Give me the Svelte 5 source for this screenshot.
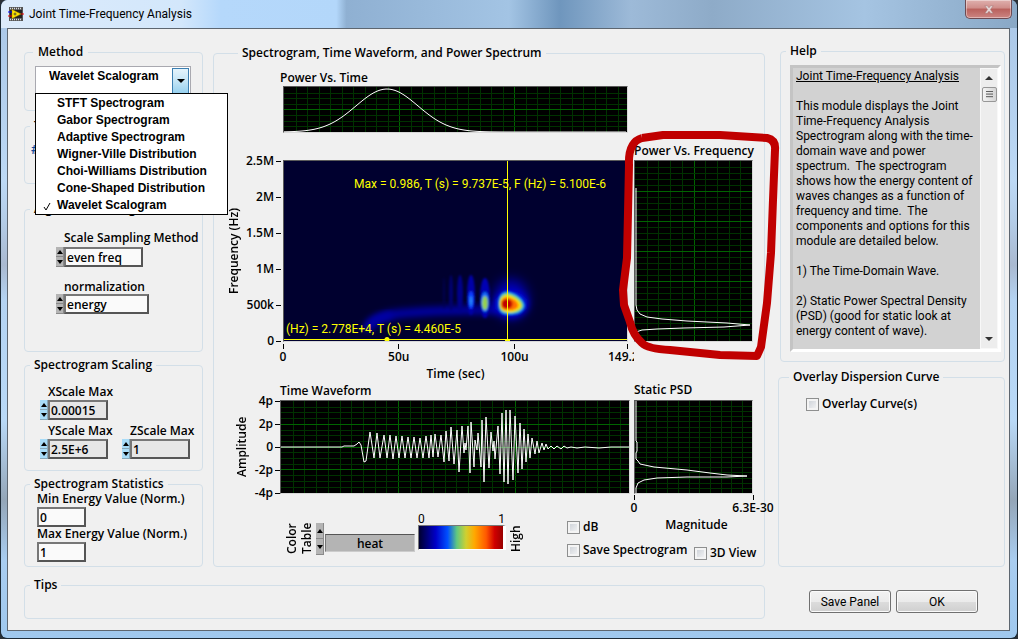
<script>
    let method = "Wavelet Scalogram";
    let menuOpen = true;

    const methods = [
        "STFT Spectrogram",
        "Gabor Spectrogram",
        "Adaptive Spectrogram",
        "Wigner-Ville Distribution",
        "Choi-Williams Distribution",
        "Cone-Shaped Distribution",
        "Wavelet Scalogram"
    ];

    const helpText = `This module displays the Joint
Time-Frequency Analysis
Spectrogram along with the time-
domain wave and power
spectrum.  The spectrogram
shows how the energy content of
waves changes as a function of
frequency and time.  The
components and options for this
module are detailed below.

1) The Time-Domain Wave.

2) Static Power Spectral Density
(PSD) (good for static look at
energy content of wave).`;

    const freqTicks = ["2.5M", "2M", "1.5M", "1M", "500k", "0"];
    const ampTicks = ["4p", "2p", "0", "-2p", "-4p"];

    // every peak and trough of the waveform, x from 0 to 348, y from 0 to 92
    const wave = [
        [0, 46], [61, 46], [63, 45], [73, 45], [76, 43], [78, 41], [80, 44], [83, 61], [85, 60], [89, 31], [93, 57], [96, 32], [99, 57],
        [103, 34], [106, 57], [109, 34], [112, 58], [115, 35], [118, 57], [121, 35], [124, 57], [127, 36], [130, 57],
        [133, 36], [136, 57], [139, 37], [142, 57], [145, 35], [148, 57], [150, 34], [152, 56], [154, 33], [157, 56],
        [160, 34], [163, 61], [165, 30], [168, 60], [170, 26], [173, 63], [176, 29], [178, 71], [181, 25], [183, 52],
        [184, 42], [185, 49], [187, 25], [189, 72], [190, 21], [193, 66], [194, 39], [196, 49], [197, 32], [200, 66],
        [201, 19], [203, 81], [205, 16], [208, 67], [210, 31], [212, 50], [213, 40], [214, 58], [217, 25], [219, 73],
        [221, 12], [223, 81], [225, 9], [227, 83], [229, 9], [232, 79], [234, 15], [237, 72], [239, 22], [241, 68],
        [243, 28], [245, 61], [247, 33], [249, 57], [251, 37], [254, 53], [256, 40], [258, 52], [261, 42], [263, 49],
        [265, 43], [267, 48], [270, 45], [273, 48], [276, 45], [280, 48], [283, 45], [286, 47], [290, 46], [296, 47],
        [304, 46], [318, 47], [330, 46], [348, 46]
    ];

    const powerTime = [];
    for (let x = 0; x <= 343; x += 3) {
        powerTime.push([x, 45 - 43 * Math.exp(-((x - 103) ** 2) / (2 * 31 ** 2))]);
    }

    const powerFreq = [
        [1, 27], [1, 144], [2, 149], [5, 153], [12, 156], [27, 158], [52, 160], [92, 162], [115, 164],
        [89, 166], [49, 167], [22, 168], [7, 169], [1, 171], [0, 178]
    ];

    const staticPsd = [
        [1, 0], [1, 40], [2, 41], [2, 50], [1, 52], [1, 58], [3, 60], [5, 63], [19, 66], [52, 69], [75, 72], [92, 74], [112, 75],
        [92, 76], [52, 76], [22, 77], [9, 79], [3, 82], [1, 87], [1, 92]
    ];

    const toPoints = (list) => list.map((p) => p.join(",")).join(" ");

    function lines(step, end) {
        let out = [];
        for (let v = step; v < end - 1; v += step) out.push(Math.round(v));
        return out;
    }

    function pick(name) {
        method = name;
        menuOpen = false;
    }
</script>

{#snippet chart(w, h, dx, dy, majorX, majorY, points, label)}
    <svg class="chart" viewBox="0 0 {w} {h}" preserveAspectRatio="none" role="img" aria-label={label}>
        {#each lines(dx, w) as x, i}
            <line class="grid" class:major={(i + 1) % majorX == 0} x1={x} y1="0" x2={x} y2={h} />
        {/each}
        {#each lines(dy, h) as y, i}
            <line class="grid" class:major={(i + 1) % majorY == 0} x1="0" y1={y} x2={w} y2={y} />
        {/each}
        <polyline class="trace" points={toPoints(points)} />
    </svg>
{/snippet}

{#snippet spinner(kind)}
    <span class="spinner {kind}">
        <button type="button" aria-label="Increase"><svg viewBox="0 0 6 4"><path d="M0 4 3 0 6 4z" /></svg></button>
        <button type="button" aria-label="Decrease"><svg viewBox="0 0 6 4"><path d="M0 0H6L3 4z" /></svg></button>
    </span>
{/snippet}

<div class="window">
    <header class="titlebar">
        <svg class="appIcon" viewBox="0 0 16 14">
            <rect x="1" width="14" height="14" fill="#555" />
            <path d="M2 1.500H14M2 12.500H14" stroke="#ddd" stroke-width="1.500" stroke-dasharray="1 1" />
            <rect x="2" y="3" width="12" height="8" fill="#222" />
            <path d="M4 2.500 13 7 4 11.500z" fill="#ffe500" stroke="#a80" stroke-width=".5" />
            <path d="M0 5H4" stroke="#00f" />
            <path d="M0 9H4M13 7H16" stroke="#e00" />
            <path d="M5.500 7H8.500M7 5.500V8.500" stroke="#333" stroke-width=".8" />
        </svg>
        <span class="title">Joint Time-Frequency Analysis</span>
        <button class="close" type="button" aria-label="Close">
            <svg viewBox="0 0 12 10"><path d="M1 .5H4L6 3 8 .5H11L7.700 5 11 9.500H8L6 7 4 9.500H1L4.300 5z" /></svg>
        </button>
    </header>

    <main>
        <div class="left">
            <fieldset class="method">
                <legend>Method</legend>
                <div class="combo">
                    <select aria-label="Method" bind:value={method} on:mousedown|preventDefault={() => (menuOpen = !menuOpen)}>
                        {#each methods as m}
                            <option>{m}</option>
                        {/each}
                    </select>
                    <span class="arrow"><svg viewBox="0 0 8 4"><path d="M0 0H8L4 4z" /></svg></span>
                    {#if menuOpen}
                        <div class="menu" role="listbox">
                            {#each methods as m}
                                <button type="button" role="option" aria-selected={m == method} on:click={() => pick(m)}>
                                    <span class="tick">
                                        {#if m == method}
                                            <svg viewBox="0 0 8 9"><path d="M1 5 3 8 7 1" /></svg>
                                        {/if}
                                    </span>{m}
                                </button>
                            {/each}
                        </div>
                    {/if}
                </div>
            </fieldset>

            <fieldset class="covered">
                <legend>T</legend>
                <span class="hash">#</span>
            </fieldset>

            <fieldset class="algorithm">
                <legend>Algorithm Settings</legend>
                <label for="sampling">Scale Sampling Method</label>
                <div class="field">{@render spinner("grey")}<input id="sampling" class="short" value="even freq" /></div>
                <label class="next" for="norm">normalization</label>
                <div class="field">{@render spinner("grey")}<input id="norm" class="long" value="energy" /></div>
            </fieldset>

            <fieldset class="scaling">
                <legend>Spectrogram Scaling</legend>
                <div class="pairs">
                    <div>
                        <label for="xmax">XScale Max</label>
                        <div class="field">{@render spinner("blue")}<input id="xmax" value="0.00015" /></div>
                    </div>
                    <div></div>
                    <div>
                        <label for="ymax">YScale Max</label>
                        <div class="field">{@render spinner("blue")}<input id="ymax" value="2.5E+6" /></div>
                    </div>
                    <div>
                        <label for="zmax">ZScale Max</label>
                        <div class="field">{@render spinner("blue")}<input id="zmax" value="1" /></div>
                    </div>
                </div>
            </fieldset>

            <fieldset class="stats">
                <legend>Spectrogram Statistics</legend>
                <label for="min">Min Energy Value (Norm.)</label>
                <input id="min" value="0" />
                <label for="max">Max Energy Value (Norm.)</label>
                <input id="max" value="1" />
            </fieldset>
        </div>

        <fieldset class="middle">
            <legend>Spectrogram, Time Waveform, and Power Spectrum</legend>
            <div class="plots">
                <h2 class="pvt">Power Vs. Time</h2>
                <div class="frame inset powerTime">
                    {@render chart(343, 45, 11.5, 5.6, 10, 4, powerTime, "Power Vs. Time")}
                </div>

                <div class="yAxis freq">
                    <span class="axisTitle">Frequency (Hz)</span>
                    <div class="ticks">
                        {#each freqTicks as t}<span>{t}</span>{/each}
                    </div>
                </div>
                <div class="frame inset spectrogram">
                    <svg class="chart" viewBox="0 0 343 180" preserveAspectRatio="none" role="img" aria-label="Spectrogram">
                        <defs>
                            <filter id="soft1" x="-50%" y="-50%" width="200%" height="200%"><feGaussianBlur stdDeviation="1" /></filter>
                            <filter id="soft3" x="-50%" y="-50%" width="200%" height="200%"><feGaussianBlur stdDeviation="3" /></filter>
                            <filter id="soft6" x="-80%" y="-80%" width="260%" height="260%"><feGaussianBlur stdDeviation="6" /></filter>
                        </defs>
                        <rect width="343" height="180" fill="#00002f" />
                        <path d="M84 166C92 154 108 153 137 151S190 149 212 149" fill="none" stroke="#0000a0" stroke-width="9" stroke-linecap="round" filter="url(#soft3)" />
                        <path d="M84 166C90 158 98 156 108 154" fill="none" stroke="#0000a8" stroke-width="7" filter="url(#soft3)" />
                        <g filter="url(#soft1)">
                            <ellipse cx="167" cy="132" rx="2" ry="18" fill="#000070" />
                            <ellipse cx="160" cy="132" rx="1" ry="16" fill="#000050" />
                            <ellipse cx="176" cy="133" rx="3" ry="19" fill="#000088" />
                            <ellipse cx="187" cy="134" rx="4" ry="20" fill="#0000a8" />
                            <ellipse cx="201" cy="137" rx="5" ry="20" fill="#0000b4" />
                            <ellipse cx="187" cy="139" rx="3" ry="9" fill="#0b3cff" />
                            <ellipse cx="187" cy="140" rx="1" ry="5" fill="#2a92f0" />
                            <ellipse cx="201" cy="141" rx="4" ry="10" fill="#1470ff" />
                            <ellipse cx="201" cy="142" rx="3" ry="7" fill="#9bd850" />
                        </g>
                        <ellipse cx="227" cy="138" rx="17" ry="20" fill="#0000b0" filter="url(#soft6)" />
                        <ellipse cx="227" cy="143" rx="17" ry="13" fill="#0008e0" filter="url(#soft3)" />
                        <g filter="url(#soft1)">
                            <path d="M214 143C214 131 221 129 227 131C236 134 241 140 241 145C240 152 232 154 225 154C217 154 214 151 214 143z" fill="#1890f0" />
                            <path d="M215 143C215 133 222 131 227 133C235 136 239 141 239 145C238 150 231 153 225 152C218 152 215 149 215 143z" fill="#7cd860" />
                            <path d="M216 143C216 135 222 133 227 135C234 138 237 142 237 145C236 149 230 151 225 151C219 151 216 148 216 143z" fill="#ffd800" />
                            <path d="M217 143C217 137 222 135 226 137C232 139 234 142 234 145C233 148 228 150 224 149C219 149 217 147 217 143z" fill="#ff7000" />
                            <ellipse cx="223" cy="143" rx="5.500" ry="5" fill="#c00000" />
                        </g>
                        <path d="M0 178.500H343M223.500 0V180" stroke="#ffff00" vector-effect="non-scaling-stroke" />
                        <circle cx="103" cy="178.500" r="2.500" fill="#ffff00" />
                        <rect x="221" y="178" width="5" height="2" fill="#ffff00" />
                    </svg>
                    <span class="readout maxValue">Max = 0.986, T (s) = 9.737E-5, F (Hz) = 5.100E-6</span>
                    <span class="readout cursorValue">(Hz) = 2.778E+4, T (s) = 4.460E-5</span>
                </div>
                <div class="timeAxis">
                    <div class="xTicks">
                        <span><b>0</b></span>
                        <span><b>50u</b></span>
                        <span><b>100u</b></span>
                        <span class="last"><b>149.2</b></span>
                    </div>
                    <div class="axisName">Time (sec)</div>
                </div>

                <h2 class="pvf">Power Vs. Frequency</h2>
                <div class="frame powerFreq">
                    {@render chart(117, 180, 11.7, 6, 5, 5, powerFreq, "Power Vs. Frequency")}
                    <svg class="marker" viewBox="0 0 164 232">
                        <path d="M24 8 45 5 102 5 149 8Q158 10 157 20L155 70 153 123 149 173 143 217 139 226 102 225 52 220Q30 219 24 213 15 205 12 192L6 175 5 160 9 128 10 83 11 35Q10 12 24 8" />
                    </svg>
                </div>

                <h2 class="tw">Time Waveform</h2>
                <div class="yAxis amp">
                    <span class="axisTitle">Amplitude</span>
                    <div class="ticks">
                        {#each ampTicks as t}<span>{t}</span>{/each}
                    </div>
                </div>
                <div class="frame waveform">
                    {@render chart(348, 92, 11.7, 5.7, 10, 4, wave, "Time Waveform")}
                </div>

                <h2 class="psdTitle">Static PSD</h2>
                <div class="frame psd">
                    {@render chart(117, 92, 10.7, 5.1, 99, 99, staticPsd, "Static PSD")}
                </div>
                <div class="psdAxis">
                    <div class="psdTicks">
                        <span><b>0</b></span>
                        <span><b>6.3E-30</b></span>
                    </div>
                    <div class="axisName">Magnitude</div>
                    <label class="check view3d"><input type="checkbox" />3D View</label>
                </div>

                <div class="controls">
                    <label class="vertical" for="ctable">Color<br />Table</label>
                    {@render spinner("tall")}
                    <input id="ctable" class="heat" value="heat" />
                    <div class="ramp">
                        <div class="rampEnds"><span>0</span><span>1</span></div>
                        <div class="rampBar"></div>
                    </div>
                    <span class="vertical high">High</span>
                    <div class="checks">
                        <label class="check"><input type="checkbox" />dB</label>
                        <label class="check"><input type="checkbox" />Save Spectrogram</label>
                    </div>
                </div>
            </div>
        </fieldset>

        <div class="right">
            <fieldset class="help">
                <legend>Help</legend>
                <div class="helpBox">
                    <div class="helpText"><u>Joint Time-Frequency Analysis</u><p>{helpText}</p></div>
                    <div class="scrollbar">
                        <button type="button" aria-label="Scroll up"><svg viewBox="0 0 8 4"><path d="M0 4 4 0 8 4z" /></svg></button>
                        <div class="thumb"><svg viewBox="0 0 8 8"><path d="M0 .5H8M0 3.500H8M0 6.500H8" stroke="#444" /></svg></div>
                        <button class="down" type="button" aria-label="Scroll down"><svg viewBox="0 0 8 4"><path d="M0 0H8L4 4z" /></svg></button>
                    </div>
                </div>
            </fieldset>
            <fieldset class="overlay">
                <legend>Overlay Dispersion Curve</legend>
                <label class="check"><input type="checkbox" />Overlay Curve(s)</label>
            </fieldset>
        </div>

        <fieldset class="tips">
            <legend>Tips</legend>
        </fieldset>
        <div class="actions">
            <button type="button">Save Panel</button>
            <button type="button">OK</button>
        </div>
    </main>
</div>

<style>

    :global(body) {
        margin: 0;
        background: #2b3036;
    }

    * {
        box-sizing: border-box;
    }

    .window {
        min-height: 100vh;
        padding: 0 7px 7px;
        display: flex;
        flex-direction: column;
        border: 1px solid #1c2a36;
        border-top-width: 0;
        border-radius: 7px;
        background: linear-gradient(#a9c6e6 0, #bdd9f5 180px, #b4cde8 220px, #a9b9d0 265px, #b4d3f2 300px, #b9d9f7 420px, #94a6b8 500px, #a9cdf0 560px, #9fc8ee 100%);
        font-family: Roboto, "Open Sans", sans-serif;
        font-size: 12px;
        line-height: 16px;
        color: #000;
    }

    .titlebar {
        height: 28px;
        margin: 0 -7px;
        padding-left: 7px;
        display: flex;
        align-items: center;
        border-radius: 7px 7px 0 0;
        background: linear-gradient(90deg, #dcebfb 0, #d3e7fb 180px, #b5d8fb 220px, #b3d7fa 33%, #8fb0d2 34%, #a3c4e4 50%, #6f96bd 55%, #9dbad8 62%, #8eabc8 70%, #a5c4e2 85%, #89a8c6 100%);
    }

    .appIcon {
        width: 16px;
        height: 14px;
        margin-right: 5px;
    }

    .title {
        flex: 1;
    }

    .close {
        align-self: flex-start;
        width: 47px;
        height: 19px;
        margin-right: 5px;
        padding: 0;
        border: 1px solid #6d4a52;
        border-top: 0;
        border-radius: 0 0 5px 5px;
        background: linear-gradient(#dfb0ae, #cf8d89 45%, #b9605c 50%, #cc8582);
        box-shadow: inset 0 0 0 1px rgba(255, 255, 255, 0.4);
    }

    .close svg {
        width: 10px;
        height: 9px;
        fill: #e6d8d8;
        stroke: #9a6a6a;
        stroke-width: 0.5;
    }

    main {
        flex: 1;
        padding: 15px 4px 0 16px;
        display: grid;
        grid-template-columns: 179px minmax(0, 1fr) 240px;
        grid-template-rows: auto 1fr;
        border: 1px solid #5d6670;
        border-width: 1px 1px 1px 0;
        background: #f0f0f0;
        box-shadow: -1px 0 0 #5d6670;
    }

    fieldset {
        min-width: 0;
        margin: 0;
        padding: 0;
        border: 1px solid #d3dfe8;
        border-radius: 4px;
    }

    legend {
        margin-left: 5px;
        padding: 0 4px;
        height: 16px;
        white-space: nowrap;
    }

    legend, label, h2, input, .ticks, .axisTitle, .axisName, .vertical {
        font-family: "Open Sans", "Noto Sans", sans-serif;
        font-size: 12px;
        line-height: 16px;
        font-weight: 600;
        color: #000;
    }

    label, h2 {
        display: block;
        margin: 0;
        white-space: nowrap;
    }

    input {
        width: 60px;
        height: 20px;
        padding: 0 0 0 1px;
        border: 2px solid;
        border-color: #777 #555 #555 #777;
        border-radius: 0;
        background: #fafafa;
        outline: none;
    }

    .left {
        display: flex;
        flex-direction: column;
    }

    /* method drop-down */
    .method {
        height: 67px;
    }

    .method legend {
        margin-left: 8px;
        padding: 0 5px;
    }

    .combo {
        position: relative;
        width: 156px;
        height: 28px;
        margin: 6px 0 0 10px;
        border: 1px solid #a9a9b0;
        background: #fff;
    }

    .combo select {
        width: 100%;
        height: 17px;
        padding: 0 0 0 13px;
        border: 0;
        appearance: none;
        background: none;
        outline: none;
    }

    .combo select, .menu button {
        font-family: "Liberation Sans", Arial, sans-serif;
        font-size: 12px;
        font-weight: 700;
        color: #000;
    }

    .arrow {
        position: absolute;
        top: 1px;
        right: 1px;
        width: 17px;
        height: 26px;
        display: flex;
        align-items: center;
        justify-content: center;
        border: 1px solid #3c7fb1;
        background: linear-gradient(#e5f4fc, #c4e5f6 50%, #98d1ef);
        pointer-events: none;
    }

    .arrow svg {
        width: 8px;
        height: 4px;
    }

    .menu {
        position: absolute;
        z-index: 2;
        top: 26px;
        left: -1px;
        width: 193px;
        padding: 0 0 1px;
        border: 1px solid #000;
        background: #fff;
    }

    .menu button {
        display: flex;
        align-items: center;
        width: 100%;
        height: 17px;
        padding: 0;
        border: 0;
        background: none;
        white-space: nowrap;
    }

    .tick {
        width: 21px;
        padding: 4px 0 0 7px;
    }

    .tick svg {
        display: block;
        width: 8px;
        height: 9px;
        fill: none;
        stroke: #000;
    }

    .covered {
        height: 66px;
        margin-top: 7px;
    }

    .hash {
        display: block;
        margin: 8px 0 0 6px;
        font-weight: 700;
        color: #124a9c;
    }

    .algorithm {
        height: 151px;
        margin-top: 17px;
    }

    .algorithm label {
        margin: 13px 0 1px 39px;
    }

    .algorithm .next {
        margin: 12px 0 -1px 39px;
    }

    .algorithm .field {
        margin-left: 31px;
    }

    .algorithm .short {
        width: 79px;
    }

    .algorithm .long {
        width: 85px;
    }

    .field {
        display: flex;
    }

    .spinner {
        display: flex;
        flex-direction: column;
        width: 8px;
        height: 20px;
    }

    .spinner button {
        flex: 1;
        display: flex;
        align-items: center;
        justify-content: center;
        padding: 0;
        border: 1px solid #8a8a8a;
        border-width: 0 1px 1px 0;
        background: #b4b4b4;
    }

    .spinner.blue button {
        border-color: #88a8b8;
        background: #a8dcf8;
    }

    .spinner svg {
        flex: none;
        width: 6px;
        height: 4px;
    }

    .spinner.tall {
        height: 32px;
    }

    .scaling {
        height: 114px;
        margin-top: 5px;
    }

    .pairs {
        display: grid;
        grid-template-columns: 82px 82px;
        margin: 11px 0 0 15px;
    }

    .pairs label {
        margin-left: 8px;
    }

    .pairs .field {
        margin-bottom: 3px;
    }

    .pairs input {
        background: #e6e6e6;
    }

    .stats {
        height: 91px;
        margin-top: 5px;
    }

    .stats label {
        margin: -1px 0 0 12px;
    }

    .stats input {
        display: block;
        width: 49px;
        margin: 0 0 0 12px;
    }

    /* plots */
    .middle {
        margin: 1px 0 0 10px;
        height: 522px;
    }

    .middle > legend {
        margin-left: 24px;
    }

    .plots {
        display: grid;
        grid-template-columns: 66px minmax(0, 1fr) 134px;
        grid-template-rows: 16px 47px 27px 182px 41px 17px 94px auto;
        margin-top: 9px;
    }

    .frame {
        position: relative;
        border: 1px solid;
        border-color: #5a5a5a #d8d8d8 #d8d8d8 #5a5a5a;
        background: #000;
    }

    .chart {
        display: block;
        width: 100%;
        height: 100%;
    }

    .grid {
        stroke: #003200;
        shape-rendering: crispEdges;
        vector-effect: non-scaling-stroke;
    }

    .grid.major {
        stroke: #006400;
    }

    .trace {
        fill: none;
        stroke: #fff;
        vector-effect: non-scaling-stroke;
    }

    .pvt { grid-area: 1 / 2; }
    .powerTime { grid-area: 2 / 2; }
    .freq { grid-area: 4 / 1; }
    .spectrogram { grid-area: 4 / 2; }
    .timeAxis { grid-area: 5 / 2; }
    .tw { grid-area: 6 / 2; }
    .amp { grid-area: 7 / 1; }
    .waveform { grid-area: 7 / 2; }
    .controls { grid-area: 8 / 1 / 9 / 3; }

    .pvf {
        grid-area: 3 / 3;
        align-self: end;
        margin: 0 0 1px 4px;
    }

    .powerFreq {
        grid-area: 4 / 3;
    }

    .psdTitle {
        grid-area: 6 / 3;
        margin: -1px 0 0 4px;
    }

    .psd {
        grid-area: 7 / 3;
    }

    .powerFreq, .psd {
        margin: 0 11px 0 4px;
    }

    .inset {
        margin: 0 2px 0 3px;
    }

    .yAxis {
        display: flex;
        justify-content: flex-end;
        gap: 2px;
    }

    .axisTitle, .vertical {
        writing-mode: vertical-rl;
        transform: rotate(180deg);
        text-align: center;
        white-space: nowrap;
    }

    .ticks {
        width: 28px;
        margin: -7px 0;
        display: flex;
        flex-direction: column;
        justify-content: space-between;
    }

    .freq .ticks {
        width: 37px;
        margin-right: -1px;
    }

    .ticks span {
        display: flex;
        align-items: center;
        justify-content: flex-end;
    }

    .ticks span::after {
        content: "";
        width: 5px;
        height: 1px;
        margin-left: 2px;
        background: #000;
    }

    .readout {
        position: absolute;
        white-space: nowrap;
        color: #ffff00;
    }

    .maxValue {
        top: 15px;
        right: 21px;
    }

    .cursorValue {
        bottom: 4px;
        left: 2px;
    }

    .timeAxis {
        margin: 2px 2px 0 3px;
    }

    .xTicks {
        display: grid;
        grid-template-columns: 50fr 50fr 49fr 0;
    }

    .xTicks span, .psdTicks span {
        display: flex;
        flex-direction: column;
        align-items: center;
        width: 0;
        white-space: nowrap;
    }

    .xTicks span::before, .psdTicks span::before {
        content: "";
        width: 1px;
        height: 5px;
        background: #000;
    }

    .xTicks b, .psdTicks b {
        font-family: "Open Sans", "Noto Sans", sans-serif;
        font-weight: 600;
    }

    .xTicks .last b {
        align-self: flex-end;
        width: 26px;
        margin-right: -6px;
        overflow: hidden;
    }

    .axisName {
        text-align: center;
    }

    .timeAxis .axisName {
        margin-top: 1px;
    }

    .marker {
        position: absolute;
        z-index: 1;
        top: -31px;
        left: -17px;
        width: 164px;
        height: 232px;
        pointer-events: none;
    }

    .marker path {
        fill: none;
        stroke: #c00000;
        stroke-width: 8px;
        stroke-linejoin: round;
    }

    .psdAxis {
        grid-area: 8 / 3;
        margin: 1px 11px 0 4px;
    }

    .psdTicks {
        display: flex;
        justify-content: space-between;
    }

    .psdAxis .axisName {
        margin: 1px 0 0 6px;
    }

    .view3d {
        margin: 12px 0 0 60px;
    }

    .controls {
        display: flex;
        align-items: flex-start;
        padding-top: 18px;
    }

    .controls .vertical {
        height: 32px;
        margin: 10px 0 0 70px;
        line-height: 15px;
        text-align: left;
    }

    .controls .spinner {
        margin: 11px 0 0 2px;
    }

    .heat {
        width: 90px;
        height: 18px;
        margin: 22px 0 0 1px;
        padding: 0;
        border-width: 1px;
        border-color: #555 #ccc #ccc #777;
        background: #b4b4b4;
        text-align: center;
    }

    .ramp {
        width: 88px;
        margin-left: 3px;
    }

    .rampEnds {
        display: flex;
        justify-content: space-between;
        height: 13px;
        padding-right: 1px;
        line-height: 14px;
    }

    .rampBar {
        height: 25px;
        border: 1px solid;
        border-color: #777 #fff #fff #777;
        border-right-width: 3px;
        background: linear-gradient(90deg, #00002f, #0000c8 20%, #0050ff 34%, #60c880 45%, #d0d030 56%, #ffa800 66%, #ff5800 80%, #d00000 90%, #980000);
    }

    .controls .high {
        height: 28px;
        margin: 12px 0 0 2px;
    }

    .checks {
        width: 0;
        margin: 7px 0 0 44px;
        display: flex;
        flex-direction: column;
        gap: 7px;
    }

    .check {
        display: flex;
        align-items: center;
        gap: 3px;
    }

    .check input {
        flex: none;
        appearance: none;
        width: 13px;
        height: 13px;
        margin: 0;
        padding: 0;
        border: 1px solid #8e8f8f;
        background: linear-gradient(135deg, #c8cdd4, #f8f8f8);
        box-shadow: inset 0 0 0 2px #f4f4f4;
    }

    /* right side */
    .right {
        margin-left: 13px;
        display: flex;
        flex-direction: column;
    }

    .help {
        height: 319px;
        margin: -1px 0 0 2px;
    }

    .helpBox {
        display: flex;
        height: 287px;
        margin: 6px 3px 0 9px;
        border: 3px solid;
        border-color: #c4c4c4 #fff #fff #c4c4c4;
        background: #d2d2d2;
    }

    .helpText {
        flex: 1;
        min-width: 0;
        padding: 1px 0 0 3px;
        overflow: hidden;
        line-height: 15px;
    }

    .helpText p {
        margin: 15px 0 0;
        white-space: pre;
    }

    .scrollbar {
        width: 18px;
        display: flex;
        flex-direction: column;
        align-items: center;
        border: 1px solid #f8f8f8;
        background: #ededed;
    }

    .scrollbar button {
        height: 18px;
        padding: 0;
        border: 0;
        background: none;
    }

    .scrollbar svg {
        display: block;
        width: 8px;
        fill: #333;
    }

    .thumb {
        width: 15px;
        height: 15px;
        padding: 3px;
        border: 1px solid #979797;
        border-radius: 2px;
        background: linear-gradient(90deg, #f4f4f4, #d4d4d4);
    }

    .thumb svg {
        width: 7px;
        height: 7px;
    }

    .scrollbar .down {
        margin-top: auto;
    }

    .overlay {
        height: 198px;
        margin-top: 7px;
    }

    .overlay legend {
        margin-left: 10px;
    }

    .overlay .check {
        margin: 11px 0 0 27px;
    }

    .tips {
        grid-column: 1 / 3;
        height: 42px;
        margin-top: 10px;
    }

    .actions {
        display: flex;
        gap: 5px;
        margin: 23px 0 0 44px;
    }

    .actions button {
        width: 82px;
        height: 23px;
        padding: 0;
        border: 1px solid #707070;
        border-radius: 3px;
        background: linear-gradient(#f2f2f2, #ebebeb 50%, #dddddd 50%, #cfcfcf);
        box-shadow: inset 0 0 0 1px #fafafa;
        font-family: Roboto, "Open Sans", sans-serif;
        font-size: 12px;
        color: #000;
    }

</style>
